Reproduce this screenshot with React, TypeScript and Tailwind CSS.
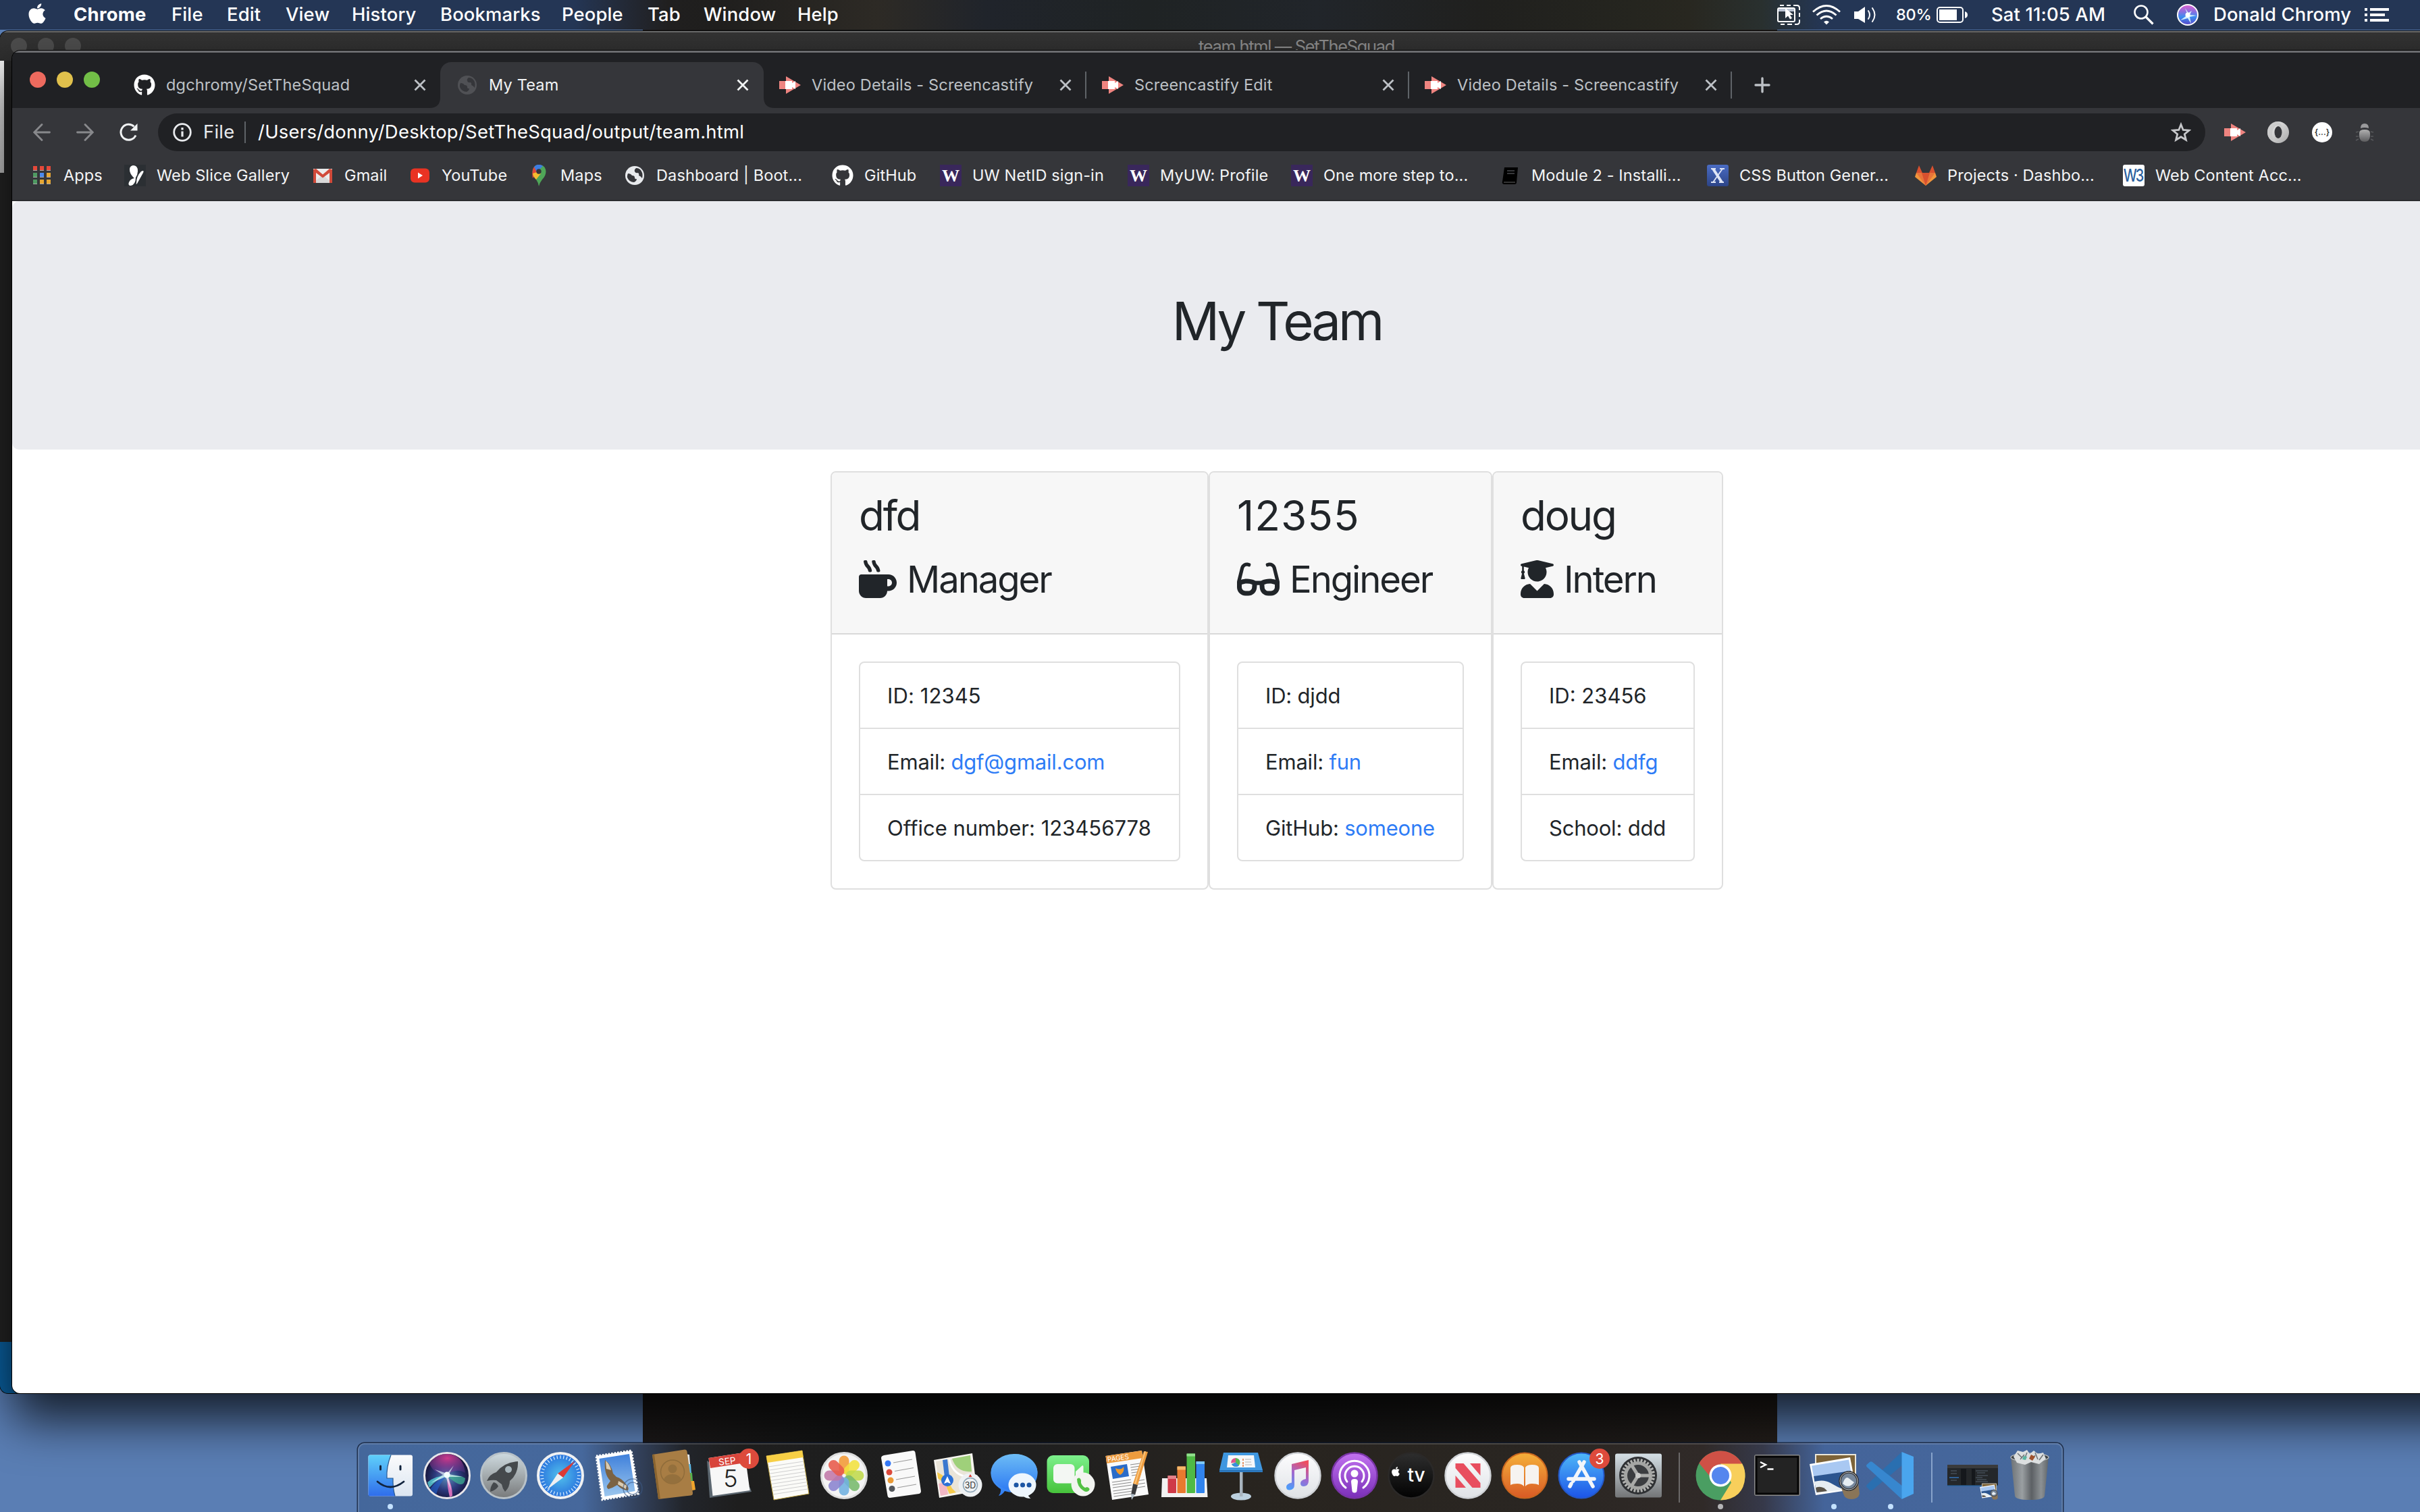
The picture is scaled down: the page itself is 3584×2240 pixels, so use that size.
import React from "react";
import { FaApple, FaGithub, FaMugHot, FaGlasses, FaUserGraduate } from "react-icons/fa";

type Kids = { children?: React.ReactNode };

/* ---------- menu bar ---------- */

const menus = [
  { label: "Chrome", cls: "w-[145px] font-bold tracking-[0.3px]" },
  { label: "File", cls: "w-[82px]" },
  { label: "Edit", cls: "w-[87px]" },
  { label: "View", cls: "w-[98px]" },
  { label: "History", cls: "w-[131px]" },
  { label: "Bookmarks", cls: "w-[180px]" },
  { label: "People", cls: "w-[127px]" },
  { label: "Tab", cls: "w-[83px]" },
  { label: "Window", cls: "w-[139px]" },
  { label: "Help", cls: "w-[80px]" },
];

function MenuBar() {
  return (
    <div className="relative z-10 flex h-[44px] w-full items-center bg-[linear-gradient(90deg,#243655_0px,#243655_850px,#232a38_920px,#201f1f_990px,#1f1e1d_1060px,#2d2a25_1300px,#20242b_1460px,#1f2324_1700px,#21252a_1950px,#20201e_2200px,#25251f_2420px,#282720_2500px,#29302f_2610px,#243655_2700px,#243655_3584px)] text-[27.4px] font-medium tracking-[0.15px] whitespace-nowrap text-white">
      <FaApple className="-mt-1 ml-[40px] h-[34px] w-[30px] shrink-0" />
      <div className="ml-[39px] flex">
        {menus.map((m) => (
          <span key={m.label} className={m.cls}>
            {m.label}
          </span>
        ))}
      </div>
      <div className="ml-[1371px] flex items-center">
        <svg viewBox="0 0 34 30" className="h-[30px] w-[34px]">
          <rect x="1" y="5" width="25" height="20" rx="2" fill="none" stroke="#fff" strokeWidth="2" />
          <path d="M2 6h23v4H2z" fill="#b9c2d2" />
          <path d="M4 1h6M14 1h6M24 1h5q4 0 4 4v3M33 12v6M33 22v3q0 4-4 4h-3M22 29h-7M11 29H5" fill="none" stroke="#fff" strokeWidth="2" />
          <path d="M12 5v15l4-3.500 3 5 3-1.500-3-5h5z" fill="#fff" />
        </svg>
        <svg viewBox="0 0 42 30" className="ml-[18px] h-[30px] w-[42px]" fill="none" stroke="#fff" strokeWidth="2.800">
          <path d="M1 10.500Q21-7.500 41 10.500M6.500 15.500Q21 2.500 35.500 15.500M12 21Q21 13.500 30 21" />
          <path d="M17 25.500Q21 22 25 25.500L21 29.500z" fill="#fff" stroke="none" />
        </svg>
        <svg viewBox="0 0 34 26" className="ml-[20px] h-[26px] w-[34px]">
          <path d="M0 8h6L16 1v24L6 19H0z" fill="#fff" />
          <path d="M21 7q4 6 0 12M27 3q7 10 0 20" fill="none" stroke="#fff" strokeWidth="2" strokeLinecap="round" />
        </svg>
        <span className="ml-[28px] w-[60px] text-[23.5px] tracking-[-0.2px]">80%</span>
        <svg viewBox="0 0 46 24" className="h-[24px] w-[46px]">
          <rect x="1" y="1" width="38" height="22" rx="4" fill="none" stroke="#fff" strokeWidth="2" />
          <rect x="4" y="4" width="26" height="16" fill="#fff" />
          <path d="M42 7q4 1 4 5t-4 5z" fill="#fff" />
        </svg>
        <span className="ml-[35px] w-[211px]">Sat 11:05 AM</span>
        <svg viewBox="0 0 30 30" className="h-[30px] w-[30px]" fill="none" stroke="#fff" strokeWidth="2.600">
          <circle cx="11" cy="11" r="9.500" />
          <path d="M18 18l10.500 10.500" strokeWidth="3.200" />
        </svg>
        <svg viewBox="0 0 32 32" className="ml-[34px] h-[32px] w-[32px]">
          <defs>
            <linearGradient id="siriSmall" x1="0" y1="0" x2="0" y2="1">
              <stop offset="0" stopColor="#e05fd0" />
              <stop offset="0.350" stopColor="#8a6fe0" />
              <stop offset="0.600" stopColor="#3a8df0" />
              <stop offset="1" stopColor="#5a45c8" />
            </linearGradient>
          </defs>
          <circle cx="16" cy="16" r="15" fill="url(#siriSmall)" stroke="#fff" strokeWidth="2" />
          <path d="M16 16L12 6l5 7 5-3-3 6 10 1-10 2 2 10-5-8-11 3z" fill="#dffaff" opacity="0.900" />
          <circle cx="16" cy="16" r="3.500" fill="#fff" />
        </svg>
        <span className="ml-[22px] w-[224px]">Donald Chromy</span>
        <svg viewBox="0 0 36 20" className="h-[20px] w-[36px]" fill="#fff">
          <path d="M0 0h4v4H0zM8 0h28v4H8zM0 8h4v4H0zM8 8h22v4H8zM0 16h4v4H0zM8 16h28v4H8z" />
        </svg>
      </div>
    </div>
  );
}

/* ---------- browser chrome ---------- */

function Screencastify({ className }: { className: string }) {
  return (
    <svg viewBox="0 0 32 32" className={className}>
      <path d="M0 10h10V3l22 13-22 13v-7H0z" fill="#ee8480" />
      <path d="M9 10h10v3l5-3v12l-5-3v3H9z" fill="#fff" />
    </svg>
  );
}

function Globe({ className, color }: { className: string; color: string }) {
  return (
    <svg viewBox="0 0 28 28" className={className}>
      <circle cx="14" cy="14" r="14" fill={color} />
      <path d="M4 11q4 0 6 3 4 0 4 3t3 2q0 3-4 5-7 0-10-7-.500-3 1-6zM16 3q-3 2-2 5t5 2q2 2 1 4 3 1 5 4 2-8-3-13-3-2.500-6-2z" fill="#35363a" />
    </svg>
  );
}

function Close({ className }: { className: string }) {
  return (
    <svg viewBox="0 0 18 18" className={className} stroke="currentColor" strokeWidth="2.800" fill="none">
      <path d="M1.500 1.500l15 15M16.500 1.500l-15 15" />
    </svg>
  );
}

type TabProps = { icon: React.ReactNode; title: string; active?: boolean; divider?: boolean };

function Tab({ icon, title, active, divider }: TabProps) {
  return (
    <div
      className={
        active
          ? "relative flex h-[68px] w-[479px] -mr-[1px] shrink-0 items-center rounded-t-[16px] bg-[#35363a] pl-[24px] text-[#f1f3f4]"
          : "relative flex h-[68px] w-[478px] shrink-0 items-center pl-[24px] text-[#bdc1c6]"
      }
    >
      {active && (
        <>
          <svg viewBox="0 0 16 16" className="absolute bottom-0 -left-[16px] h-[16px] w-[16px]">
            <path d="M16 0v16H0Q16 16 16 0z" fill="#35363a" />
          </svg>
          <svg viewBox="0 0 16 16" className="absolute -right-[16px] bottom-0 h-[16px] w-[16px]">
            <path d="M0 0v16h16Q0 16 0 0z" fill="#35363a" />
          </svg>
        </>
      )}
      <div className="flex w-[48px]">{icon}</div>
      <span className="w-[367px] text-[23.5px] tracking-[0.18px] whitespace-nowrap">{title}</span>
      <Close className="h-[18px] w-[18px]" />
      {divider && <div className="absolute right-[-1px] h-[40px] w-[2px] bg-[#5f6368]" />}
    </div>
  );
}

function TabStrip() {
  return (
    <div className="flex h-[85px] items-end border-t-3 border-[#6b6c6f] bg-[#202124] pl-[26px]">
      <div className="mb-[30px] flex w-[128px] gap-[16px]">
        <div className="h-[24px] w-[24px] rounded-full bg-[#ed6a5e]" />
        <div className="h-[24px] w-[24px] rounded-full bg-[#e0c04c]" />
        <div className="h-[24px] w-[24px] rounded-full bg-[#72be47]" />
      </div>
      <div className="ml-[2px] flex">
        <Tab icon={<FaGithub className="h-[32px] w-[32px] text-white" />} title="dgchromy/SetTheSquad" />
        <Tab active icon={<Globe className="ml-[2px] h-[28px] w-[28px]" color="#505155" />} title="My Team" />
        <Tab divider icon={<Screencastify className="h-[32px] w-[32px]" />} title="Video Details - Screencastify" />
        <Tab divider icon={<Screencastify className="h-[32px] w-[32px]" />} title="Screencastify Edit" />
        <Tab divider icon={<Screencastify className="h-[32px] w-[32px]" />} title="Video Details - Screencastify" />
      </div>
      <svg viewBox="0 0 24 24" className="mb-[22px] ml-[34px] h-[24px] w-[24px]" stroke="#bdc1c6" strokeWidth="3.400" strokeLinecap="round">
        <path d="M12 2v20M2 12h20" />
      </svg>
    </div>
  );
}

function Toolbar() {
  return (
    <div className="flex h-[72px] items-center pl-[31px]">
      <svg viewBox="0 0 26 26" className="h-[26px] w-[26px]" fill="none" stroke="#88898c" strokeWidth="2.800" strokeLinecap="round">
        <path d="M24.500 13H2M13 1.500L1.800 13 13 24.500" />
      </svg>
      <svg viewBox="0 0 26 26" className="ml-[38px] h-[26px] w-[26px]" fill="none" stroke="#88898c" strokeWidth="2.800" strokeLinecap="round">
        <path d="M1.500 13H24M13 1.500L24.200 13 13 24.500" />
      </svg>
      <svg viewBox="0 0 28 28" className="ml-[37px] h-[28px] w-[28px]">
        <path d="M22.500 5.500A11.500 11.500 0 1 0 25 18.500" fill="none" stroke="#f1f3f4" strokeWidth="3" />
        <path d="M27.500 1v10.500H17z" fill="#f1f3f4" />
      </svg>
      <div className="ml-[30px] flex h-[56px] w-[3032px] items-center rounded-full bg-[#202124] text-[27.4px] tracking-[0.28px] whitespace-nowrap">
        <svg viewBox="0 0 28 28" className="ml-[22px] h-[28px] w-[28px]" fill="none" stroke="#e8eaed" strokeWidth="2.800">
          <circle cx="14" cy="14" r="12.300" />
          <path d="M14 7v3.500M14 12.500v8" strokeWidth="3.200" />
        </svg>
        <span className="ml-[17px] w-[61px] text-[#e8eaed]">File</span>
        <div className="h-[32px] w-[2px] bg-[#5f6368]" />
        <span className="ml-[18px] text-white">/Users/donny/Desktop/SetTheSquad/output/team.html</span>
        <svg viewBox="0 0 30 30" className="mr-[21px] ml-auto h-[30px] w-[30px]" fill="none" stroke="#c6c7ca" strokeWidth="2.800">
          <path d="M15 3.500l3.200 8 8.800.700-6.700 5.600 2.100 8.500L15 21.700l-7.400 4.600 2.100-8.500L3 12.200l8.800-.700z" />
        </svg>
      </div>
      <Screencastify className="ml-[28px] h-[32px] w-[32px]" />
      <svg viewBox="0 0 32 32" className="ml-[32px] h-[32px] w-[32px]">
        <defs>
          <linearGradient id="ring" x1="0" y1="0" x2="1" y2="1">
            <stop offset="0" stopColor="#f2f2f2" />
            <stop offset="1" stopColor="#a8a8a8" />
          </linearGradient>
        </defs>
        <circle cx="16" cy="16" r="16" fill="url(#ring)" />
        <path d="M13 0a16 16 0 0 0-2 31Q2 16 13 6q8-1 9 6 1-10-9-12z" fill="#c4c4c4" opacity="0.700" />
        <ellipse cx="16" cy="16" rx="5.500" ry="9" fill="#35363a" />
      </svg>
      <div className="ml-[34px] flex h-[30px] w-[30px] items-center justify-center rounded-full bg-white text-[12px] font-semibold text-[#333]">{"{...}"}</div>
      <svg viewBox="0 0 30 30" className="ml-[33px] h-[30px] w-[30px]">
        <defs>
          <linearGradient id="bug" x1="0" y1="0" x2="0" y2="1">
            <stop offset="0" stopColor="#b0b0b0" />
            <stop offset="1" stopColor="#5c5c5e" />
          </linearGradient>
        </defs>
        <path d="M9 9q0-7 6-7t6 7q-6-2-12 0z" fill="#9a9a9c" />
        <path d="M7 16q0-5 8-5t8 5q1 13-8 13T7 16z" fill="url(#bug)" />
        <path d="M2 15l4-1M2 21h4M2 27l4-2M28 15l-4-1M28 21h-4M28 27l-4-2" stroke="#58595c" strokeWidth="1.500" />
      </svg>
    </div>
  );
}

function UW() {
  return (
    <div className="flex h-[32px] w-[32px] items-center justify-center bg-[#39275b] font-['Liberation_Serif',serif] text-[26px] font-bold text-white">W</div>
  );
}

function ButterflyIcon() {
  return (
    <svg viewBox="0 0 32 32" className="h-[32px] w-[32px]">
      <path d="M0 0h32v32H0z" fill="#2b2f33" />
      <path d="M15 20Q8 14 8 7q0-5 5-6 7 0 7 8 0 6-3 10 0 10-7 12-5 0-3-5t8-6zM18 27q0-10 7-17 5-3 3 2l-5 9-4 7q-2 2-1-1z" fill="#fff" />
    </svg>
  );
}

const bookmarks: { label: string; cls: string; icon: React.ReactNode }[] = [
  {
    label: "Apps",
    cls: "w-[138px]",
    icon: (
      <svg viewBox="0 0 32 32" className="h-[32px] w-[32px]">
        <path d="M3 2h6v6H3zM13 2h6v6h-6zM23 2h6v6h-6z" fill="#e5493a" />
        <path d="M3 12h6v6H3zM3 22h6v6H3z" fill="#4f9a62" />
        <path d="M13 12h6v6h-6z" fill="#4a8af0" />
        <path d="M23 12h6v6h-6zM13 22h6v6h-6zM23 22h6v6h-6z" fill="#e6a632" />
        <path d="M3 8h6v1H3zM13 8h6v1h-6zM23 8h6v1h-6zM3 18h6v1H3zM13 18h6v1h-6zM23 18h6v1h-6zM3 28h6v1H3zM13 28h6v1h-6zM23 28h6v1h-6z" fill="#a9a9a9" />
      </svg>
    ),
  },
  { label: "Web Slice Gallery", cls: "w-[278px]", icon: <ButterflyIcon /> },
  {
    label: "Gmail",
    cls: "w-[144px]",
    icon: (
      <svg viewBox="0 0 32 32" className="h-[32px] w-[32px]">
        <path d="M2 6h28v21H2z" fill="#ececec" />
        <path d="M2 27l14-12 14 12z" fill="#d9d9d9" />
        <path d="M2 27V7l4-1 10 8.500L26 6l4 1v20h-4V12l-10 7.500L6 12v15z" fill="#d14a3a" />
      </svg>
    ),
  },
  {
    label: "YouTube",
    cls: "w-[176px]",
    icon: (
      <svg viewBox="0 0 32 32" className="h-[32px] w-[32px]">
        <rect x="2" y="5.500" width="28" height="21" rx="6" fill="#e93323" />
        <path d="M13 11.500l7 4.500-7 4.500z" fill="#fff" />
      </svg>
    ),
  },
  {
    label: "Maps",
    cls: "w-[142px]",
    icon: (
      <svg viewBox="0 0 32 32" className="h-[32px] w-[32px]">
        <path d="M16 32q-1-6-4-10-7-8-5-15 3-7 9-7 8 0 10 7 2 8-5 15-4 5-5 10z" fill="#4fa658" />
        <path d="M9 3L16 10 7 20Q5 9 9 3z" fill="#e0483a" />
        <path d="M9 3Q15-3 22 2l-9 9z" fill="#3d7de0" />
        <path d="M7 13l9-3 3 3-7 9q-5-5-5-9z" fill="#f5bd2f" />
        <circle cx="16" cy="10" r="3.700" fill="#35363a" />
      </svg>
    ),
  },
  { label: "Dashboard | Boot...", cls: "w-[308px]", icon: <Globe className="ml-[2px] h-[28px] w-[28px]" color="#e8eaed" /> },
  { label: "GitHub", cls: "w-[160px]", icon: <FaGithub className="h-[32px] w-[32px] text-white" /> },
  { label: "UW NetID sign-in", cls: "w-[278px]", icon: <UW /> },
  { label: "MyUW: Profile", cls: "w-[242px]", icon: <UW /> },
  { label: "One more step to...", cls: "w-[308px]", icon: <UW /> },
  {
    label: "Module 2 - Installi...",
    cls: "w-[308px]",
    icon: (
      <svg viewBox="0 0 32 32" className="h-[32px] w-[32px]">
        <path d="M8 4h20l-2 22q0 3-3 3H7q-3-1-2-4z" fill="#000" />
        <path d="M12 9h11M12 13h11" stroke="#4a4b4f" strokeWidth="1.500" />
        <path d="M7 26h17" stroke="#666" strokeWidth="1" />
      </svg>
    ),
  },
  {
    label: "CSS Button Gener...",
    cls: "w-[308px]",
    icon: (
      <svg viewBox="0 0 32 32" className="h-[32px] w-[32px]">
        <defs>
          <linearGradient id="css" x1="0" y1="0" x2="0" y2="1">
            <stop offset="0" stopColor="#4a6cc4" />
            <stop offset="1" stopColor="#2c4487" />
          </linearGradient>
        </defs>
        <rect width="32" height="32" rx="3" fill="url(#css)" />
        <path d="M9 6l13 20" stroke="#dfe5f5" strokeWidth="4" />
        <path d="M23 6L9 26M6 6h7M19 6h7M6 26h7M18 26h7" stroke="#dfe5f5" strokeWidth="1.800" />
      </svg>
    ),
  },
  {
    label: "Projects · Dashbo...",
    cls: "w-[308px]",
    icon: (
      <svg viewBox="0 0 32 32" className="h-[32px] w-[32px]">
        <path d="M16 31L0 18 2 12h28l2 6z" fill="#f0953c" />
        <path d="M16 31L2 12h28z" fill="#e8743a" />
        <path d="M2 12L6 1l5 11zM30 12L26 1l-5 11zM10 12h12l-6 19z" fill="#d8502f" />
      </svg>
    ),
  },
  {
    label: "Web Content Acc...",
    cls: "w-[308px]",
    icon: (
      <div className="flex h-[32px] w-[32px] items-center justify-center rounded-[3px] bg-white text-[20px] tracking-[-2px] text-[#2a5f9e]">
        <span className="-ml-[2px] scale-y-130 font-medium">W3</span>
      </div>
    ),
  },
];

function BookmarkBar() {
  return (
    <div className="flex h-[66px] items-center border-b-2 border-[#2a2b2e] pl-[28px] pb-[8px] text-[23.5px] tracking-[0.12px] whitespace-nowrap text-[#f4f5f6]">
      {bookmarks.map((b) => (
        <div key={b.label} className={b.cls + " flex shrink-0 items-center gap-4"}>
          <div className="flex w-[32px] shrink-0">{b.icon}</div>
          <span>{b.label}</span>
        </div>
      ))}
    </div>
  );
}

/* ---------- page ---------- */

function Link({ children }: Kids) {
  return <a className="text-[#2e7cf6]">{children}</a>;
}

type CardProps = {
  name: string;
  nameCls: string;
  role: string;
  icon: React.ReactNode;
  rows: React.ReactNode[];
  width: string;
};

function Card({ name, nameCls, role, icon, rows, width }: CardProps) {
  return (
    <div className={width + " h-[620px] shrink-0 rounded-[8px] border-2 border-[#dfdfdf] bg-white"}>
      <div className="h-[240px] rounded-t-[6px] border-b-2 border-[#d9d9d9] bg-[#f7f7f7] px-[40px] pt-[24px] text-[#212529]">
        <h2 className={nameCls + " mb-[15px] text-[62px] leading-[79px] font-normal"}>{name}</h2>
        <h3 className="flex h-[79px] items-center text-[54.5px] leading-[79px] font-normal tracking-[-2.1px]">
          {icon}
          <span className="mt-[2px] ml-[15px]">{role}</span>
        </h3>
      </div>
      <div className="p-[40px]">
        <ul className="divide-y-2 divide-[#dfdfdf] rounded-[8px] border-2 border-[#dfdfdf] text-[31px] leading-[48px] tracking-[-0.2px] text-[#212529]">
          {rows.map((r, i) => (
            <li key={i} className="px-[40px] pt-[25px] pb-[23px] whitespace-nowrap">
              {r}
            </li>
          ))}
        </ul>
      </div>
    </div>
  );
}

function Page() {
  return (
    <main className="h-[1766px] bg-white">
      <header className="h-[368px] rounded-[10px] bg-[#eaebef] pt-[130px] text-center">
        <h1 className="text-[78px] leading-[96px] font-normal tracking-[-4.1px] text-[#212529]">My Team</h1>
      </header>
      <div className="mt-[32px] flex justify-center">
        <Card
          name="dfd"
          nameCls="tracking-[-2.3px]"
          role="Manager"
          width="w-[560px]"
          icon={<FaMugHot className="h-[56px] w-[56px]" />}
          rows={[
            <span className="tracking-[0.1px]">ID: 12345</span>,
            <>Email: <Link>dgf@gmail.com</Link></>,
            <span className="tracking-[0px]">Office number: 123456778</span>,
          ]}
        />
        <Card
          name="12355"
          nameCls="tracking-[1px]"
          role="Engineer"
          width="w-[420px]"
          icon={<FaGlasses className="h-[56px] w-[63px]" />}
          rows={["ID: djdd", <>Email: <Link>fun</Link></>, <>GitHub: <Link>someone</Link></>]}
        />
        <Card
          name="doug"
          nameCls="tracking-[-2.3px]"
          role="Intern"
          width="w-[342px]"
          icon={<FaUserGraduate className="h-[56px] w-[49px]" />}
          rows={[
            <span className="tracking-[0px]">ID: 23456</span>,
            <>Email: <Link>ddfg</Link></>,
            "School: ddd",
          ]}
        />
      </div>
    </main>
  );
}

function ChromeWindow() {
  return (
    <section className="absolute top-[75px] left-[18px] h-[1989px] w-[3746px] overflow-hidden rounded-[12px] bg-[#35363a] shadow-[0_0_0_1px_#000,0_40px_70px_rgba(0,0,0,0.75)]">
      <TabStrip />
      <Toolbar />
      <BookmarkBar />
      <Page />
    </section>
  );
}

function EditorWindow() {
  return (
    <section className="absolute top-[46px] left-0 h-[2018px] w-[3764px] overflow-hidden rounded-[12px] bg-[#242424] shadow-[0_0_0_1px_#0a0a0a]">
      <div className="relative flex h-[44px] justify-center border-t-2 border-[#6a6b6b] bg-linear-to-b from-[#333333] to-[#2d2d2d] pt-[3px]">
        <div className="absolute top-[8px] left-[16px] flex gap-[16px]">
          <div className="h-[24px] w-[24px] rounded-full bg-[#4c4c4c]" />
          <div className="h-[24px] w-[24px] rounded-full bg-[#4c4c4c]" />
          <div className="h-[24px] w-[24px] rounded-full bg-[#4c4c4c]" />
        </div>
        <span className="ml-[76px] text-[25.4px] leading-[35px] tracking-[-1.3px] text-[#8b8b8b]">team.html — SetTheSquad</span>
      </div>
      <div className="h-[166px] w-[6px] bg-linear-to-b from-[#f0f0f0] to-[#bdbdbd]" />
      <div className="h-[1732px]" />
      <div className="h-[76px] bg-[#0a62a3]" />
    </section>
  );
}

/* ---------- dock ---------- */

function Slot({ children, dot }: Kids & { dot?: string }) {
  return (
    <div className="flex w-[84px] shrink-0 flex-col items-center">
      <svg viewBox="0 0 84 84" className="h-[84px] w-[84px]">
        {children}
      </svg>
      {dot && <div className={dot + " h-[8px] w-[8px] rounded-full"} />}
    </div>
  );
}

function Gradient({ id, from, to }: { id: string; from: string; to: string }) {
  return (
    <linearGradient id={id} x1="0" y1="0" x2="0" y2="1">
      <stop offset="0" stopColor={from} />
      <stop offset="1" stopColor={to} />
    </linearGradient>
  );
}

function Badge({ n }: { n: string }) {
  return (
    <>
      <circle cx="69" cy="17" r="15" fill="#dd4a3c" />
      <text x="69" y="24.500" fontSize="21" fill="#fff" textAnchor="middle">{n}</text>
    </>
  );
}

const petals = [
  { a: 0, c: "#f39a35" },
  { a: 45, c: "#f2e13f" },
  { a: 90, c: "#c0d94b" },
  { a: 135, c: "#78b96c" },
  { a: 180, c: "#6fb1e0" },
  { a: 225, c: "#8a83cf" },
  { a: 270, c: "#c277a8" },
  { a: 315, c: "#e85a4a" },
];

const ticks = Array.from({ length: 36 }, (_, i) => i * 10);
const teeth = Array.from({ length: 28 }, (_, i) => (i * 360) / 28);
const ruled = Array.from({ length: 9 }, (_, i) => i * 6);

function PreviewArt() {
  return (
    <>
      <path d="M15 11h59v50H15z" fill="#7d6338" stroke="#ece7da" strokeWidth="2" />
      <path d="M6 25l60-10 9 47-60 9z" fill="#fff" />
      <path d="M9 27.500l55-9 3 17-55 8z" fill="#a9c8f2" />
      <path d="M12 43l55-8 4.500 23-55.500 9z" fill="#2c5590" />
      <path d="M13 51q14-4 24 2t20 10l-40 4.500z" fill="#e8eef2" />
      <path d="M15 60q10-4 17 5l-15 2z" fill="#5a5348" />
      <path d="M51 55q13 8 27-3l2 17q-2 8-12 8t-12-8z" fill="#8a7558" />
      <circle cx="64" cy="50" r="13" fill="#76879c" stroke="#2c2c2e" strokeWidth="3.500" />
      <circle cx="64" cy="50" r="13" fill="none" stroke="#c9c9c9" strokeWidth="1" />
      <path d="M55 54q4-12 9-8t8 6q-6 8-13 5z" fill="#e7edf2" />
    </>
  );
}

function Dock() {
  return (
    <nav className="absolute top-[2138px] left-[530px] flex h-[110px] w-[2525px] rounded-t-[10px] border-2 border-white/15 bg-[linear-gradient(90deg,#44679b_0px,#46689c_330px,#33425d_410px,#22252b_480px,#1e1e1e_560px,#1f1f1f_1000px,#28241f_1300px,#2a2622_1750px,#302a28_1990px,#36394a_2080px,#44649a_2170px,#46689c_2525px)] px-[4px] pt-[4px] shadow-[0_0_0_1.5px_rgba(15,25,45,0.75)]">
      {/* Finder */}
      <Slot dot="bg-[#c4e2ff]">
        <defs>
          <Gradient id="finderL" from="#5fd0fa" to="#2f6deb" />
          <Gradient id="finderR" from="#fbfbfc" to="#dbe5f1" />
        </defs>
        <rect x="9.500" y="11.500" width="65.500" height="61" rx="3" fill="url(#finderR)" />
        <path d="M12 11.500h31Q36 29 37 46h9q-.500 14 3 26.500H12q-2.500 0-2.500-2.500V14q0-2.500 2.500-2.500z" fill="url(#finderL)" />
        <path d="M43 11.500Q36 29 37 46h9q-.500 14 3 26.500" fill="none" stroke="#27588f" strokeWidth="1.200" />
        <path d="M27.500 28v5M57 28v5" stroke="#12243e" strokeWidth="3" strokeLinecap="round" />
        <path d="M23 51q19 16 39 0" fill="none" stroke="#12243e" strokeWidth="2.800" strokeLinecap="round" />
      </Slot>
      {/* Siri */}
      <Slot>
        <defs>
          <radialGradient id="siriBg" cx="0.500" cy="0.550" r="0.550">
            <stop offset="0" stopColor="#5b8bb8" />
            <stop offset="0.500" stopColor="#2c3a7c" />
            <stop offset="1" stopColor="#110c2c" />
          </radialGradient>
          <radialGradient id="siriPink" cx="0.500" cy="0.200" r="0.800">
            <stop offset="0" stopColor="#d63a8e" stopOpacity="0.950" />
            <stop offset="1" stopColor="#6a3a9e" stopOpacity="0.300" />
          </radialGradient>
        </defs>
        <circle cx="42" cy="42" r="33.500" fill="url(#siriBg)" stroke="#e8e6ea" strokeWidth="3" />
        <path d="M42 42Q22 40 16 24 26 9 44 10q22 2 25 28-14-8-27 4z" fill="url(#siriPink)" />
        <path d="M42 42Q60 40 69 46 68 58 58 54 50 50 42 42z" fill="#3fb694" opacity="0.700" />
        <path d="M42 42Q28 46 16 60q-2-4-3-8 12-10 29-10z" fill="#5fe8e6" opacity="0.700" />
        <path d="M42 42q8 14 8 30l-4 2q-4-16-4-32z" fill="#f07ac8" opacity="0.850" />
        <path d="M42 42q-12 12-16 28-6-4-9-8 10-14 25-20z" fill="#2264d2" opacity="0.600" />
        <circle cx="42" cy="41" r="4.500" fill="#fff" />
        <path d="M24 33l18 6 10-12-7 13 20 4-21 0 4 20-8-20-22 9 18-12z" fill="#eaffff" opacity="0.650" />
      </Slot>
      {/* Launchpad */}
      <Slot>
        <defs>
          <Gradient id="lpBg" from="#cfdbe0" to="#787a7b" />
        </defs>
        <circle cx="42" cy="42" r="33.500" fill="url(#lpBg)" stroke="#b9c2c8" strokeWidth="3" />
        <path d="M63 21q1 18-12 29 0 9-7 16-4-5-5-11l-8-6q-6-1-14 1 4-10 14-13Q43 22 63 21z" fill="#45494c" />
        <path d="M27 52q5 1 7 6-4 6-12 8 0-8 5-14z" fill="#45494c" />
        <circle cx="49" cy="33" r="5" fill="#a9b7bd" />
      </Slot>
      {/* Safari */}
      <Slot>
        <defs>
          <radialGradient id="safariBg">
            <stop offset="0" stopColor="#52c1ec" />
            <stop offset="1" stopColor="#2871dd" />
          </radialGradient>
        </defs>
        <circle cx="42" cy="42" r="33" fill="url(#safariBg)" stroke="#f0f1f2" strokeWidth="4" />
        {ticks.map((a) => (
          <path key={a} d="M42 12v5" stroke="#d9efff" strokeWidth="1.200" transform={`rotate(${a} 42 42)`} />
        ))}
        <path d="M64 20L46 45l-8-6z" fill="#dc3a35" />
        <path d="M22 63l16-24 8 6z" fill="#eef0f2" />
      </Slot>
      {/* Mail */}
      <Slot>
        <defs>
          <Gradient id="mailBg" from="#3f80db" to="#9cc7ee" />
        </defs>
        <path d="M11 13L63 5l10.500 64L20 78z" fill="#fff" stroke="#fff" strokeWidth="3" strokeDasharray="2.500 2" />
        <path d="M15.500 17L60 10l8.500 55L23.500 73z" fill="url(#mailBg)" />
        <path d="M24 19q9 6 12 20l5 5q8 2 15 12 4 4 2 8-8 0-16-8-6 4-13 6-3-2-2-5l5-7q-10-10-8-31z" fill="#7b6344" />
        <path d="M25 20q6 5 8 14l-7-2zM44 50l12 7-1 5-12-7z" fill="#d9cbb2" />
        <circle cx="65" cy="61" r="14" fill="none" stroke="#3c5a86" strokeWidth="1.500" opacity="0.600" />
        <circle cx="65" cy="61" r="9" fill="none" stroke="#3c5a86" strokeWidth="1.500" opacity="0.600" />
      </Slot>
      {/* Contacts */}
      <Slot>
        <path d="M58 10l7 1 1 14-7 1z" fill="#e5e8ea" />
        <path d="M60 25l7 0 1 14-7 1z" fill="#5fb9e4" />
        <path d="M62 38l7 0 1 12-7 1z" fill="#56b14d" />
        <path d="M63 50l9 0 2 13-9 2z" fill="#f0a52c" />
        <path d="M10 11L58 3.500q3 0 3.500 3L70 68q0 3-3 3.500L19 77z" fill="#a87d44" />
        <path d="M10 11l3-.500L22 77l-3 0z" fill="#8a642f" />
        <circle cx="40" cy="36.500" r="17.500" fill="none" stroke="#8f6c3a" strokeWidth="1.500" />
        <circle cx="40" cy="32" r="6.500" fill="#94703d" />
        <path d="M27 48q3-8 13-8t13 8q-5 6-13 6t-13-6z" fill="#94703d" />
      </Slot>
      {/* Calendar */}
      <Slot>
        <path d="M7 20l4 55 62-9-2-6z" fill="#5c6770" />
        <path d="M9.500 16L61.500 8l3 12 6 44-55 8z" fill="#f7f7f7" />
        <path d="M9.500 16L61.500 8l2.500 15-52 8z" fill="#d8453c" />
        <text x="37" y="25.500" fontSize="13.500" fill="#fff" textAnchor="middle" transform="rotate(-7 37 22)">SEP</text>
        <text x="42" y="59" fontSize="36" fontWeight="300" fill="#222" textAnchor="middle">5</text>
        <Badge n="1" />
      </Slot>
      {/* Notes */}
      <Slot>
        <path d="M11 13L64 5l10 64-52 9z" fill="#fbfbf8" stroke="#b49a3a" strokeWidth="1" />
        <path d="M11 13L64 5l1.500 10L12.500 23z" fill="#f7cf45" />
        {ruled.map((y) => (
          <path key={y} d={`M${14 + y * 0.15} ${29 + y * 0.85}l52-8`} stroke="#c9c9c9" strokeWidth="0.900" />
        ))}
      </Slot>
      {/* Photos */}
      <Slot>
        <circle cx="42" cy="42" r="33.500" fill="#f4f4f4" stroke="#dcdcdc" strokeWidth="3" />
        {petals.map((p) => (
          <rect key={p.a} x="34.500" y="12.500" width="15" height="27" rx="7.500" fill={p.c} opacity="0.880" transform={`rotate(${p.a} 42 42)`} />
        ))}
      </Slot>
      {/* Reminders */}
      <Slot>
        <path d="M17 12l43-7q3 0 3.500 3L72 65q0 3-3 4l-43 6q-3 0-3.500-3L13 16q0-3 4-4z" fill="#f9f9f9" />
        <circle cx="23" cy="24" r="4.500" fill="#3478f6" />
        <circle cx="25" cy="37" r="4.500" fill="#dc4a3c" />
        <circle cx="27" cy="49" r="4.500" fill="#ea9a35" />
        <circle cx="29" cy="61.500" r="4.500" fill="#53575c" />
        <path d="M31 23l28-5M33 35.500l28-5M35 48l28-5M37 60l28-5" stroke="#9a9a9a" strokeWidth="1.200" />
      </Slot>
      {/* Maps */}
      <Slot>
        <path d="M7 19L64 9l7 56-56 10z" fill="#f7f5f0" />
        <path d="M10 21L61 12l6 50-50 10z" fill="#e9e4d8" />
        <path d="M34 17l27-5 2 24q-22 2-29-19z" fill="#9fd07a" />
        <path d="M30 18q6 27 34 26" fill="none" stroke="#fff" strokeWidth="3" />
        <path d="M12 37q14 6 22 24l6 6-10 2Q24 53 13 46z" fill="#f6cb4c" />
        <path d="M14 54l11-2 3 18-11 2z" fill="#f1b7c4" />
        <path d="M20 19l7-1 4 34-7 1z" fill="#3a78cf" />
        <circle cx="27" cy="49" r="9" fill="#2a70d6" />
        <path d="M27 43l5 11-5-2-5 2z" fill="#fff" />
        <circle cx="61" cy="56" r="17.500" fill="#eef1f3" />
        <circle cx="61" cy="56" r="10.500" fill="none" stroke="#8ba3b5" strokeWidth="1.500" />
        <text x="61" y="60.500" fontSize="12.500" fill="#333" textAnchor="middle">3D</text>
        <path d="M61 40l2.500 4h-5z" fill="#d83a30" />
      </Slot>
      {/* Messages */}
      <Slot>
        <defs>
          <Gradient id="msg" from="#6dbcf5" to="#2f7cf3" />
        </defs>
        <path d="M42 10c20 0 34.500 12 34.500 28.500S62 67 42 67q-8 0-14-2-4 6-9 7 4-5 3-10Q7.500 53 7.500 38.500 7.500 22 42 10z" fill="url(#msg)" />
        <ellipse cx="42" cy="37" rx="34.500" ry="27" fill="url(#msg)" />
        <ellipse cx="54" cy="56" rx="20.500" ry="17.500" fill="#eef6fd" />
        <path d="M62 70q2 5 5 6-7 0-11-3z" fill="#eef6fd" />
        <path d="M45 56h.1M54.500 56h.1M64 56h.1" stroke="#1c56a4" strokeWidth="7" strokeLinecap="round" />
      </Slot>
      {/* FaceTime */}
      <Slot>
        <defs>
          <Gradient id="ft" from="#7cf08c" to="#47c33b" />
        </defs>
        <rect x="6.500" y="12" width="62.500" height="56" rx="9" fill="url(#ft)" />
        <rect x="16" y="25" width="31.500" height="28.500" rx="6" fill="#f3f7f3" />
        <path d="M49 36l10-9q1.500 0 1.500 2v20q0 2-1.500 1L49 42z" fill="#f3f7f3" />
        <circle cx="60" cy="55" r="17.500" fill="#f2f4f0" />
        <path d="M51 47q4-4 6 2l0 4q2 5 6 7l3-1q5 2 3 5-4 4-9 0-9-6-9-17z" fill="#52c144" />
      </Slot>
      {/* Pages */}
      <Slot>
        <path d="M9.500 13L63 5l10 65-54 8z" fill="#fafafa" />
        <path d="M9.500 13L63 5l1.500 11L11 24z" fill="#ee9c3e" />
        <text x="28" y="19.500" fontSize="10" fill="#fff" textAnchor="middle" transform="rotate(-8 28 16)">PAGES</text>
        <path d="M17 29l24-4 3 18-24 4z" fill="#2a6cc9" />
        <path d="M24 31q8 4 12-2 2 8-5 12-6-3-7-10z" fill="#f09a2c" />
        <path d="M46 26l14-2M46.500 30l14-2M47 34l14-2M47.500 38l14-2M48 42l14-2M19 52l28-4M19.500 56l28-4M20 60l28-4M20.500 65l28-4M21 69l28-4M21.500 73l28-4M56 50l11-2M56 55l12-2M56 60l12-2" stroke="#8b8b8b" strokeWidth="1.200" />
        <path d="M66 6l6 1-15 49-7-2z" fill="#ee9c3e" />
        <path d="M50 54l7 2-4 15-6 0z" fill="#3b3b3d" />
        <path d="M47 69l6 1-5 8z" fill="#b4c0ca" />
        <path d="M67 6l2 0-15 49-2-1z" fill="#f9c47c" />
      </Slot>
      {/* Numbers */}
      <Slot>
        <path d="M9 46h66l1.500 28H8z" fill="#f2f2f2" />
        <rect x="17.500" y="42" width="12.500" height="26" rx="1" fill="#cf3a48" />
        <rect x="31.500" y="28.500" width="12.500" height="39.500" rx="1" fill="#e87a2f" />
        <rect x="45.500" y="9.500" width="12.500" height="58.500" rx="1" fill="#4fba45" />
        <rect x="59.500" y="21" width="12.500" height="47" rx="1" fill="#3184ee" />
        <path d="M17.500 42H30v5H17.500z" fill="#e58088" />
        <path d="M31.500 28.500H44v5H31.500z" fill="#f6b86a" />
        <path d="M45.500 9.500H58v4H45.500z" fill="#92e08e" />
        <path d="M59.500 21H72v4H59.500z" fill="#7ec8f8" />
      </Slot>
      {/* Keynote */}
      <Slot>
        <ellipse cx="42" cy="73" rx="15" ry="5.500" fill="#bcd0de" />
        <path d="M40 36h4.500v37H40z" fill="#a8b4be" />
        <path d="M16 8h51l7 26v3H10v-3z" fill="#3f97e0" />
        <path d="M10 34h64v2.500H10z" fill="#2770b4" />
        <path d="M23 12h38l2 18H21z" fill="#f6f8fa" />
        <path d="M34 16a6.500 6.500 0 1 1-6 9l6-2.500z" fill="#5cba52" />
        <path d="M34 16v6.500l-7 1q0-7 7-7.500z" fill="#e0568c" />
        <path d="M34 22.500l5 5q-6 4-11-2z" fill="#3a8ee0" />
        <path d="M45 17v3M45 22v3M45 26v3" stroke="#e0763a" strokeWidth="1.500" />
        <path d="M48 18h9M48 22h9M48 26h10" stroke="#b4b4b4" strokeWidth="1" />
      </Slot>
      {/* Music */}
      <Slot>
        <defs>
          <Gradient id="disc" from="#fdfdfe" to="#dfe2e6" />
          <linearGradient id="note" x1="0.700" y1="0" x2="0.300" y2="1">
            <stop offset="0" stopColor="#ef4d5e" />
            <stop offset="0.500" stopColor="#a06ad0" />
            <stop offset="1" stopColor="#4f9af8" />
          </linearGradient>
        </defs>
        <circle cx="42" cy="42" r="33.500" fill="url(#disc)" stroke="#cfd2d6" strokeWidth="2.500" />
        <path d="M33 25l25-6v31q0 7-7 8-5 0-5-4.500 0-5 8-6.500V30l-17 4v22q0 7-7 7.500-5 0-5-4.500 0-5 8-6.500z" fill="url(#note)" />
      </Slot>
      {/* Podcasts */}
      <Slot>
        <defs>
          <Gradient id="pod" from="#c272f0" to="#7a2fb8" />
        </defs>
        <circle cx="42" cy="42" r="33.500" fill="url(#pod)" stroke="#7a35a8" strokeWidth="2.500" />
        <circle cx="42" cy="39" r="5.500" fill="#fff" />
        <path d="M37 51q0-4 5-4t5 4l-1.500 14q-.500 2.500-3.500 2.500t-3.500-2.500z" fill="#fff" />
        <path d="M31 51a14 14 0 1 1 22 0M29 60a22 22 0 1 1 26 0" fill="none" stroke="#fff" strokeWidth="3" strokeLinecap="round" />
      </Slot>
      {/* TV */}
      <Slot>
        <defs>
          <Gradient id="tv" from="#2e2e2e" to="#020202" />
        </defs>
        <circle cx="42" cy="42" r="33.500" fill="url(#tv)" stroke="#2b2928" strokeWidth="2.500" />
        <FaApple x="11" y="28" width="23" height="25" color="#fff" />
        <text x="49.500" y="51" fontSize="28" fontWeight="500" fill="#fff" textAnchor="middle">tv</text>
      </Slot>
      {/* News */}
      <Slot>
        <circle cx="42" cy="42" r="33.500" fill="url(#disc)" stroke="#cfd2d6" strokeWidth="2.500" />
        <path d="M23.500 24h12l25 29v7h-12l-25-29z" fill="#e84e5f" />
        <path d="M45 24h15.500v18zM23.500 42L39 60H23.500z" fill="#e84e5f" />
      </Slot>
      {/* Books */}
      <Slot>
        <defs>
          <Gradient id="books" from="#f5b03a" to="#d95a25" />
        </defs>
        <circle cx="42" cy="42" r="33.500" fill="url(#books)" stroke="#c9661f" strokeWidth="2" />
        <path d="M21 31q0-5 10-5 8 0 10 4v28q-3-4-10-4-7 0-10 2zM63 31q0-5-10-5-8 0-10 4v28q3-4 10-4 7 0 10 2z" fill="#f6f3f0" />
      </Slot>
      {/* App Store */}
      <Slot>
        <defs>
          <Gradient id="store" from="#4fb8f8" to="#1c54e8" />
        </defs>
        <circle cx="42" cy="42" r="33.500" fill="url(#store)" stroke="#2458c8" strokeWidth="2" />
        <path d="M39 22l20 36M46 22L30 50M23 47h38M27 54l-2 4" stroke="#f3f6fa" strokeWidth="5.500" strokeLinecap="round" />
        <Badge n="3" />
      </Slot>
      {/* System Preferences */}
      <Slot>
        <defs>
          <Gradient id="prefs" from="#d5e0e6" to="#737577" />
        </defs>
        <rect x="8" y="9.500" width="69" height="65" rx="3" fill="url(#prefs)" />
        <circle cx="42" cy="42" r="28" fill="#2e3033" />
        {teeth.map((a) => (
          <path key={a} d="M42 17v5" stroke="#b1b2b0" strokeWidth="3" transform={`rotate(${a} 42 42)`} />
        ))}
        <circle cx="42" cy="42" r="18.500" fill="#3b3d40" stroke="#a4a5a3" strokeWidth="5" />
        <path d="M42 42h19M42 42L32 26M42 42L32 58" stroke="#a9aaa8" strokeWidth="5" />
        <circle cx="42" cy="42" r="4" fill="#c9cac8" />
      </Slot>
      <div className="flex w-[38px] justify-center pt-[8px]">
        <div className="h-[74px] w-[2px] bg-[#6a6868]" />
      </div>
      {/* Chrome */}
      <Slot dot="bg-[#b4b4b6]">
        <circle cx="42" cy="42" r="36.500" fill="#4a9e62" />
        <path d="M42 24h32q5 9 4.500 20-2 33-36.500 34.500l16-26z" fill="#f8cf5b" />
        <path d="M10.400 23.700A36.500 36.500 0 0 1 74 24.500H42L27 44z" fill="#cf5146" />
        <circle cx="42" cy="42" r="16.500" fill="#fff" />
        <circle cx="42" cy="42" r="13" fill="#5586ee" />
      </Slot>
      {/* Terminal */}
      <Slot>
        <rect x="9" y="12" width="66" height="59" rx="2" fill="#222" stroke="#8c8c8c" strokeWidth="2" />
        <rect x="11" y="14" width="62" height="55" fill="#232323" stroke="#050505" strokeWidth="3" />
        <path d="M17 22l8 4-8 4M27.500 32.500h9" fill="none" stroke="#fff" strokeWidth="2.400" />
      </Slot>
      {/* Preview */}
      <Slot dot="bg-[#c4e2ff]">
        <PreviewArt />
      </Slot>
      {/* VS Code */}
      <Slot dot="bg-[#c4e2ff]">
        <path d="M58.500 7L7 55.500q-2 2 0 4l4 4q2 1.500 4 0L60 26z" fill="#2a6fb0" />
        <path d="M7 25.500q-2 2 0 4L58.500 77 60 58 15 22q-2-1.500-4 0z" fill="#3787cf" />
        <path d="M58.500 7L76 14v55l-17.500 8z" fill="#4aa5ee" />
      </Slot>
      <div className="flex w-[38px] justify-center pt-[8px]">
        <div className="h-[74px] w-[2px] bg-[#87a3cb]" />
      </div>
      {/* Minimised editor */}
      <Slot>
        <path d="M4 26h75v32H4z" fill="#24272a" />
        <path d="M4 26h75v5H4z" fill="#3a3b3c" />
        <path d="M4 56.500h75V58H4z" fill="#2b66a3" />
        <path d="M7 44h14v2H7z" fill="#2f5f92" />
        <path d="M24 32h8v24h-8zM40 32h5v24h-5z" fill="#15181c" />
        <path d="M46 35h18M48 38h12M48 42h16M46 45h10M48 48h14M46 51h18M9 35h9M9 39h9M9 49h9" stroke="#52606c" strokeWidth="1.100" />
        <g transform="translate(50 50) scale(0.360)">
          <PreviewArt />
        </g>
      </Slot>
      {/* Trash */}
      <Slot>
        <defs>
          <linearGradient id="bin" x1="0" y1="0" x2="1" y2="0">
            <stop offset="0" stopColor="#6d7276" />
            <stop offset="0.300" stopColor="#9a9fa2" />
            <stop offset="0.550" stopColor="#5c6064" />
            <stop offset="0.800" stopColor="#8c9194" />
            <stop offset="1" stopColor="#5f6468" />
          </linearGradient>
        </defs>
        <path d="M14 14h56l-6 58q-1 6-22 6t-22-6z" fill="url(#bin)" />
        <ellipse cx="42" cy="15" rx="28" ry="6" fill="#3c4043" stroke="#b1b5b8" strokeWidth="1.500" />
        <path d="M18 14l6-9 8 2 6-3 4 6 6-5 6 5 8-2 4 9-10 8-12-3-9 4-12-3z" fill="#dcdfe0" />
        <path d="M24 9l6 6M38 8l-4 10M50 8l4 10M62 11l-6 8M28 18l6-7M46 18l4-6" stroke="#6d7174" strokeWidth="1.500" />
        <path d="M44 11l6 3-4 6-5-3z" fill="#a0522d" />
        <path d="M33 13l5 1-2 5-5-1z" fill="#59b4a0" />
      </Slot>
    </nav>
  );
}

export default function App() {
  return (
    <div className="relative h-[2240px] w-[3584px] overflow-hidden bg-[#5a7eb4] font-['Inter','Liberation_Sans',sans-serif]">
      <div className="absolute top-0 left-[952px] h-[2240px] w-[1680px] bg-[linear-gradient(90deg,#1b1818,#111313_20%,#161616_60%,#221d1a)]" />
      <MenuBar />
      <EditorWindow />
      <ChromeWindow />
      <Dock />
    </div>
  );
}
